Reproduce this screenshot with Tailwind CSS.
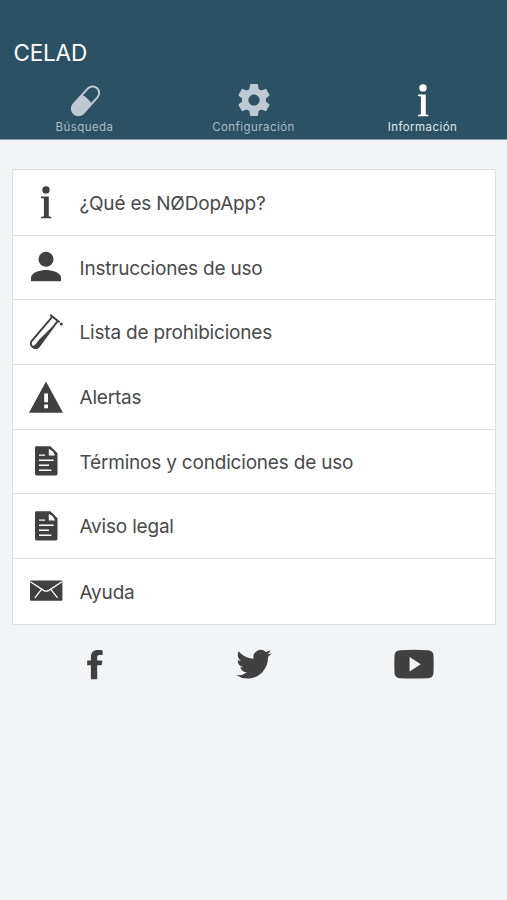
<!DOCTYPE html>
<html lang="es">
  <head>
    <meta charset="UTF-8" />
    <meta name="viewport" content="width=device-width, initial-scale=1.0" />
    <title>CELAD</title>
    <script src="https://cdn.jsdelivr.net/npm/@tailwindcss/browser@4"></script>
  </head>
  <body class="bg-[#f2f4f6] min-h-screen font-['Inter',sans-serif]">
    <!-- Shared icons -->
    <svg class="hidden" xmlns="http://www.w3.org/2000/svg">
      <symbol id="icon-info" viewBox="0 0 36 36">
        <circle cx="18" cy="5.9" r="3.7" />
        <path d="M13 12.6h7.8v19.6l2.6.7v1.3H13v-1.3l2.9-.7V14.6L13 13.9z" />
      </symbol>
      <symbol id="icon-doc" viewBox="0 0 36 36">
        <path
          fill-rule="evenodd"
          d="M8.4 3.2h14l7.1 7v20.6a1.6 1.6 0 0 1-1.6 1.6H8.6a1.6 1.6 0 0 1-1.6-1.6V4.600a1.400 1.400 0 0 1 1.400-1.400zM20.800 5.800v6.800h6.300l-2.200-4zM11 11.400v1.400h6v-1.400zM11 16.600V18h14.600v-1.400zM11 21.600V23h10v-1.400zM11 26.600V28h12.400v-1.400z"
        />
      </symbol>
    </svg>

    <!-- Header -->
    <header class="bg-[#2c5164] h-[140px] pt-[37px] border-b border-[#8399a5]">
      <h1 class="px-[13.5px] text-[22.5px] leading-8 tracking-[-0.2px] text-white">CELAD</h1>
      <nav class="grid grid-cols-3 mt-3 text-[11.5px] tracking-[0.45px] leading-4 text-[#a9bbc7]">
        <a class="flex flex-col items-center">
          <svg class="w-9 h-9 mt-px text-[#becad3]" viewBox="0 0 36 36" fill="none">
            <g transform="rotate(42 18.5 18.8)">
              <rect x="11.900" y="1.700" width="13.200" height="34.200" rx="6.600" stroke="currentColor" stroke-width="2" />
              <path fill="currentColor" d="M11.500 18.500q0-2.600 7-2.600t7 2.600v11a7 7 0 0 1-14 0z" />
            </g>
          </svg>
          <span class="mt-px">Búsqueda</span>
        </a>
        <a class="flex flex-col items-center">
          <svg class="w-9 h-9 mt-px text-[#becad3]" viewBox="0.750 0.750 22.500 22.500" fill="currentColor">
            <path
              d="M19.43 12.98c.04-.32.07-.64.07-.98s-.03-.66-.07-.98l2.11-1.65c.19-.15.24-.42.12-.64l-2-3.46c-.12-.22-.39-.3-.61-.22l-2.49 1c-.52-.4-1.08-.73-1.69-.98l-.38-2.65C14.46 2.18 14.25 2 14 2h-4c-.25 0-.46.18-.49.42l-.38 2.65c-.61.25-1.17.59-1.69.98l-2.49-1c-.23-.09-.49 0-.61.22l-2 3.46c-.13.22-.07.49.12.64l2.11 1.65c-.04.32-.07.65-.07.98s.03.66.07.98l-2.11 1.65c-.19.15-.24.42-.12.64l2 3.46c.12.22.39.3.61.22l2.49-1c.52.4 1.08.73 1.69.98l.38 2.65c.03.24.24.42.49.42h4c.25 0 .46-.18.49-.42l.38-2.65c.61-.25 1.17-.59 1.69-.98l2.49 1c.23.09.49 0 .61-.22l2-3.46c.12-.22.07-.49-.12-.64l-2.11-1.65zM12 15.5c-1.93 0-3.5-1.57-3.5-3.5s1.57-3.5 3.5-3.5 3.5 1.57 3.5 3.5-1.57 3.5-3.5 3.5z"
            />
          </svg>
          <span class="mt-px">Configuración</span>
        </a>
        <a class="flex flex-col items-center text-[#dfe7ec]">
          <svg class="w-9 h-9 mt-px text-white" fill="currentColor"><use href="#icon-info" /></svg>
          <span class="mt-px">Información</span>
        </a>
      </nav>
    </header>

    <!-- Menu -->
    <main class="pl-3 pr-[11px] pt-[29px]">
      <ul
        class="bg-white border border-[#dcdfe1] divide-y divide-[#dcdfe1] text-[19px] tracking-[-0.2px] text-[#4a4a4a]"
      >
        <li class="flex items-center h-[65.500px] px-[15px] gap-[15.500px]">
          <svg class="w-9 h-9 text-[#404040]" fill="currentColor"><use href="#icon-info" /></svg>
          <span class="pt-[3px]">¿Qué es NØDopApp?</span>
        </li>
        <li class="flex items-center h-[64.700px] px-[15px] gap-[15.500px]">
          <svg class="w-9 h-9 text-[#404040]" viewBox="0 0 36 36" fill="currentColor">
            <circle cx="18" cy="10.200" r="7.500" />
            <path d="M3 32.200v-3.800c0-5 10-7.400 15-7.400s15 2.400 15 7.400v3.800z" />
          </svg>
          <span class="pt-[3px]">Instrucciones de uso</span>
        </li>
        <li class="flex items-center h-[64.700px] px-[15px] gap-[15.500px]">
          <svg class="w-9 h-9 text-[#404040]" viewBox="0 0 36 36" fill="none" stroke="currentColor">
            <path stroke-width="2" stroke-linecap="round" d="M22.800 1.400l8.200 6.400" />
            <path stroke-width="1.900" d="M24 3.200L3.400 27.400a4.500 4.500 0 0 0 7 5.400L29.400 7.400" />
            <path fill="currentColor" stroke="none" d="M29.600 7.400L11.200 33.400c-1.800 2-5.800 1.800-7.200-.8 3-.6 5-4.400 6.800-6.600z" />
            <circle cx="33.300" cy="10" r="1.600" fill="currentColor" stroke="none" />
          </svg>
          <span class="pt-[3px]">Lista de prohibiciones</span>
        </li>
        <li class="flex items-center h-[64.700px] px-[15px] gap-[15.500px]">
          <svg class="w-9 h-9 text-[#404040]" viewBox="0 0 36 36" fill="currentColor">
            <path
              fill-rule="evenodd"
              d="M18 2.400L35 33.800H1zM16.200 14.600v8.600h3.800v-8.600zM16.200 25.400v3.800h3.800v-3.800z"
            />
          </svg>
          <span class="pt-[3px]">Alertas</span>
        </li>
        <li class="flex items-center h-[64.700px] px-[15px] gap-[15.500px]">
          <svg class="w-9 h-9 text-[#404040]" fill="currentColor"><use href="#icon-doc" /></svg>
          <span class="pt-[3px]">Términos y condiciones de uso</span>
        </li>
        <li class="flex items-center h-[64.700px] px-[15px] gap-[15.500px]">
          <svg class="w-9 h-9 text-[#404040]" fill="currentColor"><use href="#icon-doc" /></svg>
          <span class="pt-[3px]">Aviso legal</span>
        </li>
        <li class="flex items-center h-[64.700px] px-[15px] gap-[15.500px]">
          <svg class="w-9 h-9" viewBox="0 0 36 36" fill="none">
            <rect x="2" y="7.600" width="32.400" height="20.200" rx="1" fill="#404040" />
            <path
              stroke="#fff"
              stroke-width="1.300"
              d="M2.400 8.800l13.200 8.600q2.600 1.600 5.200 0l13.200-8.600M13.600 16.400L6.800 24.800M22.800 16.400l6.800 8.400"
            />
          </svg>
          <span class="pt-[3px]">Ayuda</span>
        </li>
      </ul>
    </main>

    <!-- Social links -->
    <footer class="grid grid-cols-3 justify-items-center pl-[15px] pr-[13px] mt-[19.500px] text-[#404040]">
      <svg class="w-10 h-10" viewBox="0 0 40 40" fill="currentColor">
        <path
          d="M27.600 6.200v4.700h-2.800c-2.200 0-2.600 1-2.600 2.500v3.100h5.200l-.7 4.700h-4.500v14.100h-6.300V21.200h-3.700v-4.700h3.700v-3.600c0-4.500 2.700-7 6.900-7 2 0 4.200.1 4.800.3z"
        />
      </svg>
      <svg class="w-10 h-10" viewBox="0 0 40 40" fill="currentColor">
        <path
          transform="translate(2.300 2.500) scale(1.470)"
          d="M23.950 4.570a10 10 0 0 1-2.820.77 4.960 4.960 0 0 0 2.160-2.720c-.95.550-2 .95-3.130 1.180a4.920 4.920 0 0 0-8.380 4.480C7.690 8.090 4.070 6.130 1.640 3.160a4.820 4.820 0 0 0-.67 2.480c0 1.710.87 3.210 2.190 4.100a4.900 4.900 0 0 1-2.230-.620v.06a4.920 4.920 0 0 0 3.950 4.830 5 5 0 0 1-2.210.080 4.940 4.940 0 0 0 4.600 3.420A9.870 9.870 0 0 1 0 19.540a14 14 0 0 0 7.550 2.210c9.050 0 14-7.500 14-13.980 0-.21 0-.42-.02-.63a9.940 9.940 0 0 0 2.460-2.550z"
        />
      </svg>
      <svg class="w-10 h-10" viewBox="0 0 40 40" fill="currentColor">
        <path
          fill-rule="evenodd"
          d="M6 6.200q14-.8 28 0 5.200.4 5.500 5.200.4 9 0 17.600-.3 5-5.500 5.300-14 .6-28 0-5.200-.3-5.500-5.300-.4-8.600 0-17.600.3-4.800 5.500-5.200zM15.600 13v14.600l11.200-7.300z"
        />
      </svg>
    </footer>
  </body>
</html>
